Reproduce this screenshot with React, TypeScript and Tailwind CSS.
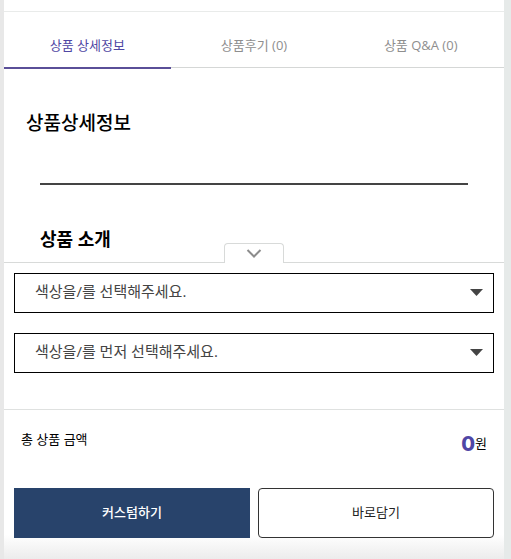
import React from 'react';

const tabs = [
  { label: '상품 상세정보', active: true },
  { label: '상품후기 (0)', active: false },
  { label: '상품 Q&A (0)', active: false },
];

function OptionSelect({ label, placeholder }: { label: string; placeholder: string }) {
  return (
    <div className="relative">
      <select
        aria-label={label}
        className="block h-10 w-full appearance-none rounded-none border border-black bg-white pr-10 pb-1 pl-5 text-[15px] text-[#444]"
      >
        <option>{placeholder}</option>
      </select>
      <svg
        className="pointer-events-none absolute top-4 right-[11px] h-[7px] w-[13px]"
        viewBox="0 0 13 7"
        fill="#444"
      >
        <path d="M0 0h13L6.5 7z" />
      </svg>
    </div>
  );
}

export default function ProductPage() {
  return (
    <div className="border-r-[7px] border-l-4 border-r-[#e6eae9] border-l-[#e8e8e8] bg-white pt-[11px] font-['Open_Sans','Noto_Sans_CJK_KR',sans-serif] text-black">
      <nav className="flex items-start border-t border-[#e9ebea] bg-white">
        {tabs.map((tab) => (
          <button
            key={tab.label}
            className={
              tab.active
                ? 'h-[57px] flex-1 border-b-2 border-[#5a4f98] pt-3 text-[13px] text-[#5047a3]'
                : 'h-14 flex-1 border-b border-[#d5d7d6] pt-3 text-[13px] text-[#8e8e8e]'
            }
          >
            {tab.label}
          </button>
        ))}
      </nav>

      <main className="h-[193px] pt-10">
        <h1 className="pl-[22px] text-[19px] leading-7 font-medium">상품상세정보</h1>
        <hr className="mx-9 mt-[46px] border-t-2 border-[#444]" />
        <h2 className="mt-10 pl-9 text-lg leading-7 font-bold">상품 소개</h2>
      </main>

      <section className="relative border-t border-[#d8dad9]">
        <button
          aria-label="옵션 닫기"
          className="absolute -top-5 left-1/2 flex h-5 w-[60px] -translate-x-1/2 justify-center rounded-t border border-b-0 border-[#d8dad9] bg-white pt-[5px]"
        >
          <svg className="h-[9px] w-4" viewBox="0 0 16 9" fill="none" stroke="#8c8c8c" strokeWidth="2">
            <path d="M1.5 1l6.500 6.500L14.500 1" />
          </svg>
        </button>
        <div className="flex flex-col gap-5 px-2.5 pt-2.5 pb-9">
          <OptionSelect label="색상" placeholder="색상을/를 선택해주세요." />
          <OptionSelect label="추가 옵션" placeholder="색상을/를 먼저 선택해주세요." />
        </div>
        <div className="flex h-[69px] items-center justify-between border-t border-[#dfe1e0] px-[17px]">
          <span className="pb-2 text-[13px]">총 상품 금액</span>
          <span className="flex items-center text-[13px]">
            <strong className="font-[Inter] text-xl font-extrabold text-[#4f46a5]">0</strong>원
          </span>
        </div>
        <div className="grid grid-cols-2 gap-2 bg-linear-to-b from-white from-70% to-[#ececec] px-2.5 pt-2.5 pb-[21px]">
          <button className="h-[50px] bg-[#28436b] text-[13px] font-medium text-white">커스텀하기</button>
          <button className="h-[50px] rounded border border-[#333] bg-white text-[13px] text-[#222]">
            바로담기
          </button>
        </div>
      </section>
    </div>
  );
}
